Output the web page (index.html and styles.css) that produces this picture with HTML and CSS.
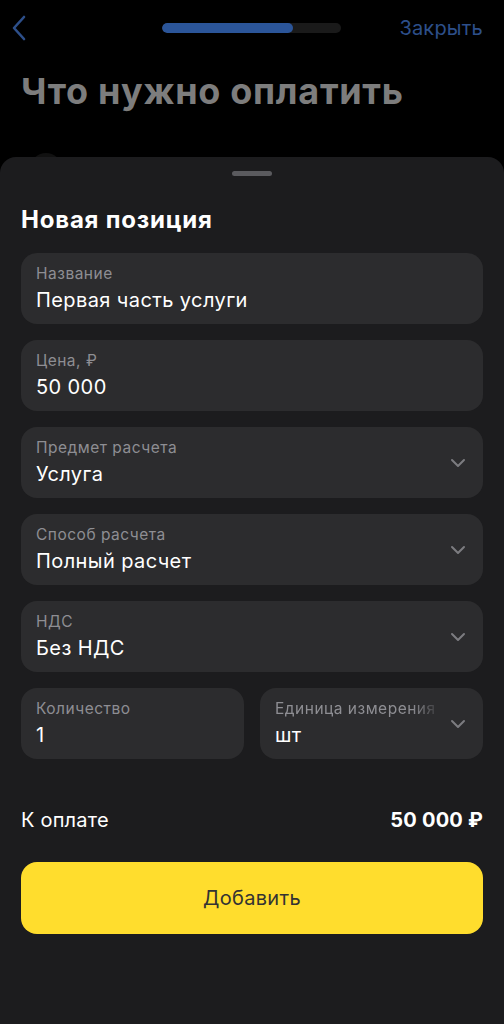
FILE: index.html
```html
<!DOCTYPE html>
<html lang="ru">
<head>
    <meta charset="UTF-8">
    <meta name="viewport" content="width=device-width, initial-scale=1.0">
    <title>Новая позиция</title>
    <link rel="stylesheet" href="styles.css">
</head>
<body>
    <header class="topbar">
        <svg class="back" width="16" height="26" viewBox="0 0 16 26">
            <path d="M13 2 L3 13 L13 24" fill="none" stroke="#2d4f8a" stroke-width="2.6" stroke-linecap="round" stroke-linejoin="round"/>
        </svg>
        <div class="progress"><div class="progress-fill" style="width: 73%"></div></div>
        <a href="#close" class="close">Закрыть</a>
    </header>

    <section class="behind">
        <h1>Что нужно оплатить</h1>
        <div class="behind-circle"></div>
    </section>

    <main class="sheet">
        <div class="handle"></div>
        <h2>Новая позиция</h2>

        <div class="fields">
            <div class="field">
                <div class="field-text">
                    <span class="label">Название</span>
                    <span class="value">Первая часть услуги</span>
                </div>
            </div>
            <div class="field">
                <div class="field-text">
                    <span class="label">Цена, ₽</span>
                    <span class="value">50 000</span>
                </div>
            </div>
            <div class="field">
                <div class="field-text">
                    <span class="label">Предмет расчета</span>
                    <span class="value">Услуга</span>
                </div>
                <svg class="chevron" width="16" height="10" viewBox="0 0 16 10"><path d="M2 2 L8 8 L14 2" fill="none" stroke="#7c7c80" stroke-width="2" stroke-linecap="round" stroke-linejoin="round"/></svg>
            </div>
            <div class="field">
                <div class="field-text">
                    <span class="label">Способ расчета</span>
                    <span class="value">Полный расчет</span>
                </div>
                <svg class="chevron" width="16" height="10" viewBox="0 0 16 10"><path d="M2 2 L8 8 L14 2" fill="none" stroke="#7c7c80" stroke-width="2" stroke-linecap="round" stroke-linejoin="round"/></svg>
            </div>
            <div class="field">
                <div class="field-text">
                    <span class="label">НДС</span>
                    <span class="value">Без НДС</span>
                </div>
                <svg class="chevron" width="16" height="10" viewBox="0 0 16 10"><path d="M2 2 L8 8 L14 2" fill="none" stroke="#7c7c80" stroke-width="2" stroke-linecap="round" stroke-linejoin="round"/></svg>
            </div>
            <div class="field-row">
                <div class="field">
                    <div class="field-text">
                        <span class="label">Количество</span>
                        <span class="value">1</span>
                    </div>
                </div>
                <div class="field">
                    <div class="field-text">
                        <span class="label fade">Единица измерения</span>
                        <span class="value">шт</span>
                    </div>
                    <svg class="chevron" width="16" height="10" viewBox="0 0 16 10"><path d="M2 2 L8 8 L14 2" fill="none" stroke="#7c7c80" stroke-width="2" stroke-linecap="round" stroke-linejoin="round"/></svg>
                </div>
            </div>
        </div>

        <div class="total">
            <span>К оплате</span>
            <span class="sum">50 000 ₽</span>
        </div>

        <a href="#add" class="btn">Добавить</a>
    </main>
</body>
</html>
```

FILE: styles.css
```css
body {
    font-family: Inter, "Noto Sans", sans-serif;
    margin: 0;
    padding: 0;
    background-color: #000;
    color: #fff;
    height: 1024px;
    overflow: hidden;
}

.topbar {
    display: grid;
    grid-template-columns: 1fr auto 1fr;
    align-items: center;
    height: 56px;
    padding: 0 21px 0 11px;
}

.back {
    display: block;
}

.progress {
    width: 179px;
    height: 10px;
    margin-left: 9px;
    background-color: #1a1a1a;
    border-radius: 5px;
    overflow: hidden;
}

.progress-fill {
    height: 100%;
    background-color: #2b5599;
    border-radius: 5px;
}

.close {
    justify-self: end;
    color: #2d4f8a;
    font-size: 20px;
    letter-spacing: 0.2px;
    text-decoration: none;
}

.behind {
    padding: 0 21px;
    height: 101px;
    overflow: hidden;
}

.behind h1 {
    margin: 13px 0 0;
    font-size: 36px;
    font-weight: 700;
    color: #7d7d7d;
    letter-spacing: 0.7px;
    line-height: 44px;
}

.behind-circle {
    width: 32px;
    height: 32px;
    margin: 40px 0 0 9px;
    border-radius: 50%;
    background-color: #111;
}

.sheet {
    background-color: #1c1c1e;
    border-radius: 16px 16px 0 0;
    padding: 0 21px;
    height: 900px;
}

.handle {
    width: 40px;
    height: 5px;
    margin: 0 auto;
    position: relative;
    top: 14px;
    background-color: #5a5a5e;
    border-radius: 3px;
}

.sheet h2 {
    margin: 0;
    padding: 40px 0 16px;
    font-size: 24px;
    font-weight: 700;
    letter-spacing: 0.8px;
    line-height: 35px;
}

.fields {
    display: flex;
    flex-direction: column;
    gap: 16px;
}

.field-row {
    display: flex;
    gap: 16px;
}

.field-row .field {
    flex: 1;
    min-width: 0;
}

.field {
    display: flex;
    align-items: center;
    height: 71px;
    padding: 0 17px 0 15px;
    box-sizing: border-box;
    background-color: #2c2c2e;
    border-radius: 16px;
}

.field-text {
    flex: 1;
    min-width: 0;
    display: flex;
    flex-direction: column;
}

.label {
    font-size: 15.5px;
    line-height: 20px;
    letter-spacing: 0.5px;
    color: #8e8e93;
    white-space: nowrap;
    overflow: hidden;
}

.label.fade {
    -webkit-mask-image: linear-gradient(to right, #000 82%, transparent 100%);
    mask-image: linear-gradient(to right, #000 82%, transparent 100%);
}

.value {
    font-size: 20px;
    line-height: 28px;
    letter-spacing: 0.4px;
    margin-top: 2px;
    color: #fff;
}

.chevron {
    flex-shrink: 0;
    margin-left: 8px;
}

.total {
    display: flex;
    justify-content: space-between;
    align-items: center;
    margin-top: 47px;
    font-size: 20px;
    line-height: 28px;
    letter-spacing: 0.2px;
}

.sum {
    font-weight: 700;
}

.btn {
    display: block;
    margin-top: 28px;
    height: 72px;
    line-height: 72px;
    background-color: #ffdd2d;
    color: #333;
    text-align: center;
    font-size: 20px;
    letter-spacing: 0.3px;
    border-radius: 16px;
    text-decoration: none;
}
```
